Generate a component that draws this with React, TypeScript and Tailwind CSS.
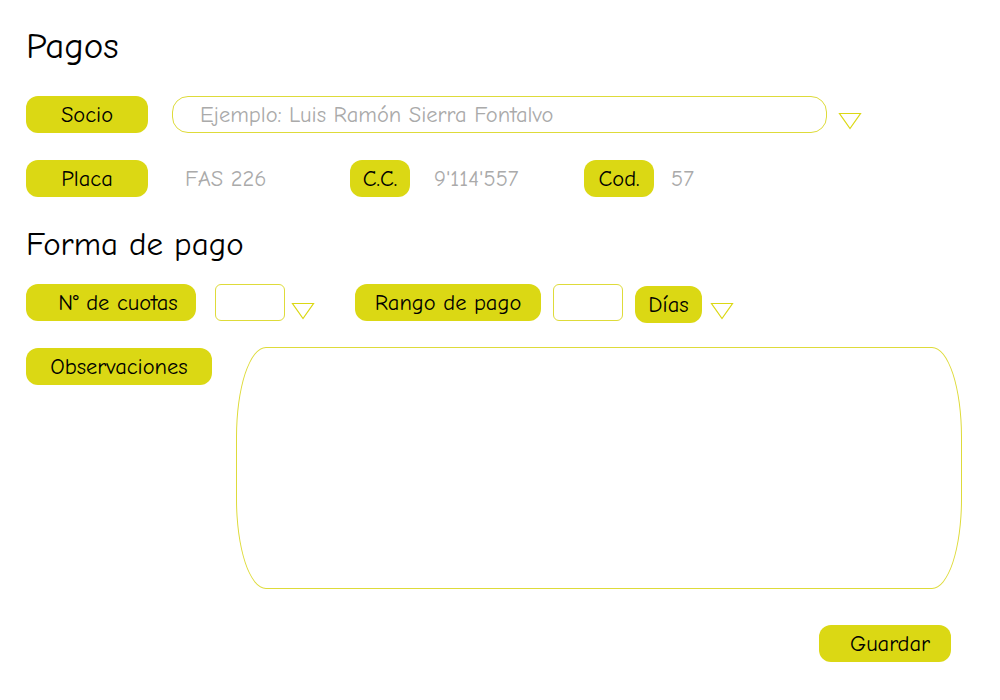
import React from "react";

const font = { fontFamily: '"Comic Sans MS", "Comic Neue", "DejaVu Sans", sans-serif' };

function Pill({ children, className = "" }: { children: React.ReactNode; className?: string }) {
  return (
    <div
      className={
        "flex h-[37px] items-center justify-center rounded-[12px] bg-[#dbd814] pt-[3px] text-[22.5px] text-black " +
        className
      }
    >
      {children}
    </div>
  );
}

function Arrow() {
  return (
    <svg width="24" height="18" viewBox="0 0 24 18" className="shrink-0">
      <path d="M1.5 1.5 H22.5 L12 16.5 Z" fill="none" stroke="#dbd814" strokeWidth="1.2" />
    </svg>
  );
}

export default function App() {
  return (
    <div className="relative h-[700px] w-[1000px] bg-white pl-[26px]" style={font}>
      <h1 className="pt-[22px] text-[37px] leading-[48px] text-black">Pagos</h1>

      {/* Socio */}
      <div className="mt-[26px] flex items-start">
        <Pill className="w-[122px]">Socio</Pill>
        <div className="ml-[24px] flex h-[37px] w-[655px] items-center rounded-[16px] border border-[#dedb3a] pl-[27px] pt-[2px] text-[22.5px] text-[#aaaaaa]">
          Ejemplo: Luis Ramón Sierra Fontalvo
        </div>
        <div className="ml-[11px] mt-[16px]">
          <Arrow />
        </div>
      </div>

      {/* Placa / C.C. / Cod. */}
      <div className="mt-[27px] flex items-center text-[22.5px] text-[#aaaaaa]">
        <Pill className="w-[122px]">Placa</Pill>
        <span className="ml-[37px] w-[165px] pt-[3px]">FAS 226</span>
        <Pill className="w-[60px]">C.C.</Pill>
        <span className="ml-[24px] w-[150px] pt-[3px]">9'114'557</span>
        <Pill className="w-[70px]">Cod.</Pill>
        <span className="ml-[17px] pt-[3px]">57</span>
      </div>

      <h2 className="mt-[26px] text-[33px] leading-[42px] text-black">Forma de pago</h2>

      {/* Cuotas / Rango */}
      <div className="mt-[19px] flex items-start">
        <Pill className="w-[170px] pl-[14px]">N° de cuotas</Pill>
        <div className="ml-[19px] h-[37px] w-[70px] rounded-[6px] border border-[#dedb3a]" />
        <div className="ml-[6px] mt-[18px]">
          <Arrow />
        </div>
        <Pill className="ml-[40px] w-[186px]">Rango de pago</Pill>
        <div className="ml-[12px] h-[37px] w-[70px] rounded-[6px] border border-[#dedb3a]" />
        <Pill className="ml-[12px] mt-[2px] w-[67px]">Días</Pill>
        <div className="ml-[8px] mt-[18px]">
          <Arrow />
        </div>
      </div>

      {/* Observaciones */}
      <div className="mt-[25px] flex items-start">
        <Pill className="w-[186px]">Observaciones</Pill>
        <textarea className="-mt-[1px] ml-[24px] h-[242px] w-[726px] resize-none rounded-[30px/90px] border border-[#dedb3a] outline-none" />
      </div>

      <div className="mt-[36px] flex justify-end pr-[49px]">
        <Pill className="w-[132px] pl-[10px]">Guardar</Pill>
      </div>
    </div>
  );
}
